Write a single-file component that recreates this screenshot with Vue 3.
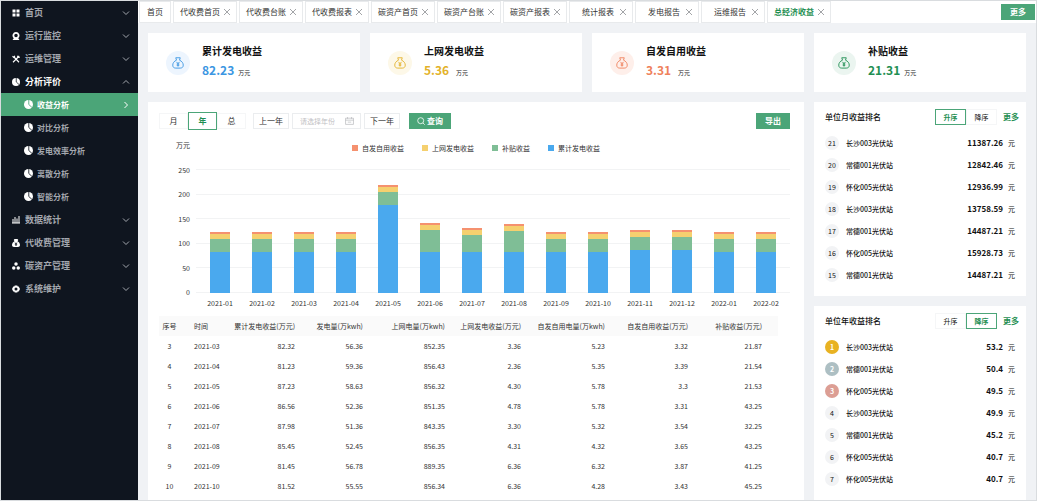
<script setup>
import { ref } from 'vue'

const menu = [
  { name: '首页', icon: 'grid' },
  { name: '运行监控', icon: 'camera' },
  { name: '运维管理', icon: 'tools' },
  {
    name: '分析评价',
    icon: 'pie',
    open: true,
    children: ['收益分析', '对比分析', '发电效率分析', '离散分析', '智能分析'],
  },
  { name: '数据统计', icon: 'bars' },
  { name: '代收费管理', icon: 'bag' },
  { name: '碳资产管理', icon: 'dots' },
  { name: '系统维护', icon: 'gear' },
]
const activeItem = ref('收益分析')

const tabs = [
  '代收费首页', '代收费台账', '代收费报表', '碳资产首页', '碳资产台账',
  '碳资产报表', '统计报表', '发电报告', '运维报告', '总经济收益',
]
const activeTab = ref('总经济收益')

const cards = [
  { title: '累计发电收益', value: '82.23', tone: 'blue' },
  { title: '上网发电收益', value: '5.36', tone: 'yellow' },
  { title: '自发自用收益', value: '3.31', tone: 'orange' },
  { title: '补贴收益', value: '21.31', tone: 'green' },
]

const periods = ['月', '年', '总']
const period = ref('年')
const year = ref('')

const legend = [
  { name: '自发自用收益', tone: 'self' },
  { name: '上网发电收益', tone: 'grid' },
  { name: '补贴收益', tone: 'subsidy' },
  { name: '累计发电收益', tone: 'total' },
]
const axisMax = 250
const ticks = [250, 200, 150, 100, 50, 0]
const bars = [
  { month: '2021-01', values: [4, 10, 26, 83] },
  { month: '2021-02', values: [4, 10, 26, 83] },
  { month: '2021-03', values: [4, 10, 26, 83] },
  { month: '2021-04', values: [4, 10, 26, 83] },
  { month: '2021-05', values: [4, 10, 26, 178] },
  { month: '2021-06', values: [4, 10, 44, 83] },
  { month: '2021-07', values: [4, 10, 34, 83] },
  { month: '2021-08', values: [4, 10, 42, 83] },
  { month: '2021-09', values: [4, 10, 26, 83] },
  { month: '2021-10', values: [4, 10, 26, 83] },
  { month: '2021-11', values: [4, 10, 26, 87] },
  { month: '2021-12', values: [4, 10, 26, 87] },
  { month: '2022-01', values: [4, 10, 26, 83] },
  { month: '2022-02', values: [4, 10, 26, 83] },
]

const columns = [
  '序号', '时间', '累计发电收益(万元)', '发电量(万kwh)', '上网电量(万kwh)',
  '上网发电收益(万元)', '自发自用电量(万kwh)', '自发自用收益(万元)', '补贴收益(万元)',
]
const rows = [
  ['3', '2021-03', '82.32', '56.36', '852.35', '3.36', '5.23', '3.32', '21.87'],
  ['4', '2021-04', '81.23', '59.36', '856.43', '2.36', '5.35', '3.39', '21.54'],
  ['5', '2021-05', '87.23', '58.63', '856.32', '4.30', '5.78', '3.3', '21.53'],
  ['6', '2021-06', '86.56', '52.36', '851.35', '4.78', '5.78', '3.31', '43.25'],
  ['7', '2021-07', '87.98', '51.36', '843.35', '3.30', '5.32', '3.54', '32.25'],
  ['8', '2021-08', '85.45', '52.45', '856.35', '4.31', '4.32', '3.65', '43.25'],
  ['9', '2021-09', '81.45', '56.78', '889.35', '6.36', '6.32', '3.87', '41.25'],
  ['10', '2021-10', '81.52', '55.55', '856.34', '6.36', '4.28', '3.43', '45.25'],
]

const rankings = ref([
  {
    title: '单位月收益排名',
    order: '升序',
    items: [
      [21, '长沙003光伏站', '11387.26'],
      [20, '常德001光伏站', '12842.46'],
      [19, '怀化005光伏站', '12936.99'],
      [18, '长沙003光伏站', '13758.59'],
      [17, '常德001光伏站', '14487.21'],
      [16, '怀化005光伏站', '15928.73'],
      [15, '常德001光伏站', '14487.21'],
    ],
  },
  {
    title: '单位年收益排名',
    order: '降序',
    items: [
      [1, '长沙003光伏站', '53.2'],
      [2, '常德001光伏站', '50.4'],
      [3, '怀化005光伏站', '49.5'],
      [4, '长沙003光伏站', '49.9'],
      [5, '常德001光伏站', '45.2'],
      [6, '怀化005光伏站', '40.7'],
      [7, '怀化005光伏站', '40.7'],
    ],
  },
])
</script>

<template>
  <div class="shell">
    <nav class="side">
      <template v-for="item in menu" :key="item.name">
        <a href="#" class="item" :class="{ open: item.open }">
          <svg class="ico" viewBox="0 0 16 16" aria-hidden="true">
            <path v-if="item.icon === 'grid'" d="M1 1h6v6H1zM9 1h6v6H9zM1 9h6v6H1zM9 9h6v6H9z" />
            <path v-else-if="item.icon === 'camera'" fill-rule="evenodd" d="M8 0a7 7 0 0 1 4.500 12.300L15 16H1l2.500-3.700A7 7 0 0 1 8 0zm0 3.500a3.500 3.500 0 1 0 0 7 3.500 3.500 0 0 0 0-7z" />
            <g v-else-if="item.icon === 'tools'" fill="none" stroke="currentColor" stroke-width="2.200">
              <path d="M2 14.500 14.500 2M4 4l10 10.500" />
              <path d="M1 2.500l3 2.500 1.500-3.500M11 1.500l1 3 3.500.5" />
            </g>
            <g v-else-if="item.icon === 'pie'">
              <circle cx="8" cy="8" r="8" /><path class="slit" d="M8.500 0v8l5.500 5" />
            </g>
            <path v-else-if="item.icon === 'bars'" d="M1 6h2v8H1zM5 2h2v12H5zM9 5h2v9H9zM13 0h2v14h-2zM0 13h16v2H0z" />
            <path v-else-if="item.icon === 'bag'" fill-rule="evenodd" d="M5 0h6l1.500 2L11 4.500c3 1.500 5 4.500 5 7.500 0 2.500-1.500 4-4 4H4c-2.500 0-4-1.500-4-4 0-3 2-6 5-7.500L3.500 2zM5 7l2 2.500H5.500V11H7v3h2v-3h1.500V9.500H9L11 7H9.500L8 9 6.500 7z" />
            <g v-else-if="item.icon === 'dots'">
              <circle cx="8" cy="4" r="3.500" /><circle cx="3.500" cy="12" r="3.500" /><circle cx="12.500" cy="12" r="3.500" />
            </g>
            <path v-else fill-rule="evenodd" d="M5.500 1h5l1 1.800h2L16 8l-2.500 5.200h-2l-1 1.800h-5l-1-1.800h-2L0 8l2.500-5.200h2zM8 5a3 3 0 1 0 0 6 3 3 0 0 0 0-6z" />
          </svg>
          <span>{{ item.name }}</span>
          <svg class="arrow" viewBox="0 0 8 8" aria-hidden="true">
            <path :d="item.open ? 'M1 5.500 4 2.500l3 3' : 'M1 2.500l3 3 3-3'" />
          </svg>
        </a>
        <a
          v-for="child in item.children"
          :key="child"
          href="#"
          class="item sub"
          :class="{ active: child === activeItem }"
          @click.prevent="activeItem = child"
        >
          <svg class="ico" viewBox="0 0 16 16" aria-hidden="true">
            <circle cx="8" cy="8" r="8" /><path class="slit" d="M8.500 0v8l5.500 5" />
          </svg>
          <span>{{ child }}</span>
          <svg v-if="child === activeItem" class="arrow" viewBox="0 0 8 8" aria-hidden="true">
            <path d="M2.500 1l3 3-3 3" />
          </svg>
        </a>
      </template>
    </nav>

    <div class="main">
      <header class="tabs">
        <div class="tab home"><a href="#">首页</a></div>
        <div v-for="tab in tabs" :key="tab" class="tab" :class="{ current: tab === activeTab }">
          <a href="#" @click.prevent="activeTab = tab">{{ tab }}</a>
          <button type="button" class="close" :aria-label="'关闭' + tab">
            <svg viewBox="0 0 8 8" aria-hidden="true"><path d="M1 1l6 6M7 1 1 7" /></svg>
          </button>
        </div>
        <button type="button" class="solid more-tabs">更多</button>
      </header>

      <main class="board">
        <section v-for="card in cards" :key="card.title" class="card" :class="card.tone">
          <div class="badge">
            <svg viewBox="0 0 16 16" aria-hidden="true">
              <path d="M5 1h6l-1 3.200c3.200 1.300 5 4 5 6.600 0 2.700-1.600 4-4 4H5c-2.400 0-4-1.300-4-4 0-2.600 1.800-5.300 5-6.600z" />
              <path d="M6 6.500l2 2.300 2-2.300M8 8.800v4M6.300 9.300h3.400M6.300 11h3.400" />
            </svg>
          </div>
          <div>
            <h2>{{ card.title }}</h2>
            <p><strong>{{ card.value }}</strong><small>万元</small></p>
          </div>
        </section>

        <section class="panel report">
          <div class="toolbar">
            <div class="segment">
              <button
                v-for="p in periods"
                :key="p"
                type="button"
                :class="{ on: p === period }"
                @click="period = p"
              >{{ p }}</button>
            </div>
            <button type="button" class="plain">上一年</button>
            <label class="date">
              <input v-model="year" type="text" placeholder="请选择年份" aria-label="年份" />
              <svg viewBox="0 0 16 14" aria-hidden="true"><path d="M1 2h14v11H1zM1 5.500h14M4.500 0v3M11.500 0v3M5 9h6" /></svg>
            </label>
            <button type="button" class="plain">下一年</button>
            <button type="button" class="solid query">
              <svg viewBox="0 0 8 8" aria-hidden="true"><circle cx="3.700" cy="3.700" r="3" /><path d="M6 6l1.700 1.700" /></svg>
              查询
            </button>
            <button type="button" class="solid export">导出</button>
          </div>

          <div class="chart">
            <span class="unit">万元</span>
            <ul class="legend">
              <li v-for="l in legend" :key="l.name"><i :class="l.tone"></i>{{ l.name }}</li>
            </ul>
            <div class="yaxis"><span v-for="t in ticks" :key="t">{{ t }}</span></div>
            <div class="lines"><i v-for="t in ticks" :key="t"></i></div>
            <div class="bars">
              <div v-for="b in bars" :key="b.month" class="bar">
                <i
                  v-for="(v, n) in b.values"
                  :key="n"
                  :class="legend[n].tone"
                  :style="{ height: (v / axisMax) * 100 + '%' }"
                ></i>
              </div>
            </div>
            <div class="xaxis"><span v-for="b in bars" :key="b.month">{{ b.month }}</span></div>
          </div>

          <table>
            <colgroup><col v-for="(c, n) in columns" :key="c" :class="'c' + n" /></colgroup>
            <thead>
              <tr><th v-for="c in columns" :key="c" scope="col">{{ c }}</th></tr>
            </thead>
            <tbody>
              <tr v-for="r in rows" :key="r[0]"><td v-for="(v, n) in r" :key="n">{{ v }}</td></tr>
            </tbody>
          </table>
        </section>

        <div class="ranks">
          <section v-for="rank in rankings" :key="rank.title" class="panel rank">
            <header>
              <h3>{{ rank.title }}</h3>
              <div class="segment">
                <button
                  v-for="o in ['升序', '降序']"
                  :key="o"
                  type="button"
                  :class="{ on: o === rank.order }"
                  @click="rank.order = o"
                >{{ o }}</button>
              </div>
              <a href="#">更多</a>
            </header>
            <ol>
              <li v-for="[no, name, amount] in rank.items" :key="no">
                <span class="no" :class="'n' + no">{{ no }}</span>
                <span class="name">{{ name }}</span>
                <b>{{ amount }}</b>
                <span class="yuan">元</span>
              </li>
            </ol>
          </section>
        </div>
      </main>
    </div>
  </div>
</template>

<style>
body {
  margin: 0;
}
</style>

<style scoped>
* {
  box-sizing: border-box;
}
.shell {
  display: flex;
  height: 100vh;
  overflow: hidden;
  border: 1px solid #d9dcdf;
  background: #f0f2f5;
  color: #333;
  font: 7px/10px "Noto Sans CJK SC", sans-serif;
}
a {
  color: inherit;
  text-decoration: none;
}
button,
input {
  margin: 0;
  padding: 0;
  border: 0;
  background: none;
  color: inherit;
  font: inherit;
}
button {
  cursor: pointer;
}
h2, h3, p, ul, ol {
  margin: 0;
  padding: 0;
  list-style: none;
}
svg {
  display: block;
  flex: none;
}

.side {
  flex: 0 0 137px;
  background: #0f151f;
  color: #a3a7ae;
}
.item {
  display: flex;
  align-items: center;
  gap: 5px;
  height: 23px;
  padding: 0 8px 0 11px;
  font-size: 9px;
  font-weight: 700;
}
.item.open {
  color: #fff;
}
.ico {
  width: 8px;
  height: 8px;
  color: #fff;
  fill: currentColor;
}
.slit {
  fill: none;
  stroke: #0f151f;
  stroke-width: 1.5;
}
.arrow {
  width: 8px;
  height: 8px;
  margin-left: auto;
  fill: none;
  stroke: #a3a7ae;
}
.sub {
  gap: 4px;
  padding-left: 23px;
  font-size: 8px;
}
.sub .ico {
  width: 9px;
  height: 9px;
}
.sub.active {
  background: #4ba578;
  color: #fff;
}
.sub.active .arrow {
  stroke: #fff;
}
.sub.active .slit {
  stroke: #4ba578;
}

.main {
  display: flex;
  flex: 1;
  flex-direction: column;
  min-width: 0;
}
.tabs {
  display: flex;
  flex: none;
  gap: 2px;
  height: 22px;
  padding-left: 1px;
  background: #fff;
  font-size: 8px;
}
.tab {
  display: flex;
  align-items: center;
  justify-content: flex-end;
  gap: 3px;
  width: 64px;
  padding-right: 5px;
  border: 1px solid #e8eaec;
}
.tab a {
  min-width: 36px;
  text-align: center;
}
.tab.home {
  justify-content: center;
  width: 32px;
  padding: 0;
}
.tab.home a {
  min-width: 0;
}
.tab.current a {
  color: #1f8f53;
  font-weight: 700;
}
.close svg {
  width: 8px;
  height: 8px;
  fill: none;
  stroke: #8b8e92;
  stroke-width: 0.8;
}
.solid {
  height: 16px;
  background: #4ba578;
  color: #fff;
  font-size: 8px;
  font-weight: 700;
}
.more-tabs {
  width: 34px;
  margin: 3px 1px 0 auto;
}

.board {
  display: grid;
  flex: 1;
  grid-template-columns: repeat(4, 1fr);
  grid-template-rows: 59px 1fr;
  gap: 10px;
  min-height: 0;
  padding: 10px 10px 0;
}
.card {
  display: flex;
  align-items: center;
  gap: 12px;
  padding-left: 18px;
  background: #fff;
}
.card h2 {
  color: #111;
  font-size: 10px;
  line-height: 18px;
}
.card p {
  display: flex;
  align-items: baseline;
  gap: 4px;
  line-height: 20px;
}
.card strong {
  min-width: 28px;
  font-size: 12px;
}
.card small {
  color: #222;
  font-size: 6px;
}
.badge {
  display: grid;
  place-items: center;
  width: 24px;
  height: 24px;
  border-radius: 50%;
}
.badge svg {
  width: 12px;
  height: 12px;
  fill: none;
  stroke: currentColor;
  stroke-width: 1.2;
}
.blue { color: #3b96e2; }
.yellow { color: #e3b22a; }
.orange { color: #ef815c; }
.green { color: #1f8f53; }
.blue .badge { background: #edf5fe; }
.yellow .badge { background: #fdf8e8; }
.orange .badge { background: #feefea; }
.green .badge { background: #ebf5f0; }

.panel {
  background: #fff;
}
.report {
  grid-column: span 3;
  min-height: 0;
  padding: 10px 14px 0 11px;
  overflow: hidden;
}
.toolbar {
  display: flex;
  align-items: center;
  height: 18px;
  font-size: 8px;
}
.segment {
  display: flex;
}
.segment button {
  width: 31px;
  height: 16px;
  border: 1px solid #f5f6f7;
}
.segment button.on {
  border-color: #4ba578;
  color: #1f8f53;
  font-weight: 700;
}
.toolbar .segment {
  align-items: center;
  margin-right: 7px;
}
.toolbar .segment button {
  width: 29px;
}
.toolbar .segment button.on {
  height: 18px;
}
.plain,
.date {
  height: 16px;
  border: 1px solid #ebedef;
}
.plain {
  width: 36px;
}
.date {
  display: flex;
  align-items: center;
  width: 69px;
  margin: 0 3px;
  padding: 0 6px 0 7px;
}
.date input {
  flex: 1;
  min-width: 0;
  outline: 0;
  font-size: 7px;
}
.date input::placeholder {
  color: #bfc1c4;
}
.date svg {
  width: 9px;
  height: 8px;
  fill: none;
  stroke: #a5a8ab;
}
.query {
  display: flex;
  align-items: center;
  justify-content: center;
  gap: 2px;
  width: 42px;
  margin-left: 9px;
}
.query svg {
  width: 8px;
  height: 8px;
  fill: none;
  stroke: #fff;
  stroke-width: 0.8;
}
.export {
  width: 34px;
  margin-left: auto;
}

.chart {
  display: grid;
  grid-template-columns: 31px 1fr;
  grid-template-rows: 29px 124px 18px;
  column-gap: 6px;
  padding-top: 10px;
}
.unit {
  text-align: right;
}
.legend {
  display: flex;
  gap: 18px;
  align-self: start;
  justify-content: center;
  padding: 3px 34px 0 0;
}
.legend li {
  display: flex;
  align-items: center;
  gap: 4px;
}
.legend i {
  width: 6px;
  height: 6px;
}
.yaxis,
.lines,
.bars {
  grid-row: 2;
}
.yaxis,
.lines {
  display: flex;
  flex-direction: column;
  justify-content: space-between;
}
.yaxis span {
  display: flex;
  align-items: center;
  justify-content: flex-end;
  height: 1px;
}
.lines {
  grid-column: 2;
}
.lines i {
  height: 1px;
  background: #f2f3f4;
}
.bars,
.xaxis {
  display: grid;
  grid-column: 2;
  grid-template-columns: repeat(14, 1fr);
  padding: 0 3px;
}
.bar {
  display: flex;
  flex-direction: column;
  justify-content: flex-end;
  width: 20px;
  height: 100%;
  margin: 0 auto;
}
.xaxis {
  align-items: end;
  padding-bottom: 3px;
  text-align: center;
}
.self { background: #f5916f; }
.grid { background: #f5d06f; }
.subsidy { background: #7fbe96; }
.total { background: #4aa9ee; }

table {
  width: calc(100% - 12px);
  margin-top: 5px;
  border-collapse: collapse;
  table-layout: fixed;
  white-space: nowrap;
}
.c0 { width: 21px; }
.c1 { width: 46px; }
.c2 { width: 69px; }
.c3 { width: 68px; }
.c4 { width: 82px; }
.c5 { width: 76px; }
.c6 { width: 84px; }
.c7 { width: 83px; }
.c8 { width: 90px; }
th,
td {
  height: 20px;
  padding: 0;
  font-weight: 400;
  text-align: right;
}
thead {
  background: #fafafa;
}
th:first-child,
td:first-child {
  text-align: center;
}
th:nth-child(2),
td:nth-child(2) {
  padding-left: 14px;
  text-align: left;
}
th:last-child,
td:last-child {
  padding-right: 16px;
}

.ranks {
  display: flex;
  flex-direction: column;
  gap: 10px;
  min-height: 0;
}
.rank {
  flex: none;
  padding: 7px 7px 10px 11px;
  color: #111;
}
.rank header {
  display: flex;
  align-items: center;
  height: 16px;
  margin-bottom: 7px;
}
.rank h3 {
  margin-right: auto;
  font-size: 8px;
  font-weight: 500;
}
.rank header a {
  margin-left: 6px;
  color: #1f8f53;
  font-size: 8px;
  font-weight: 700;
}
.rank li {
  display: flex;
  align-items: center;
  height: 22px;
  padding-right: 4px;
}
.name {
  font-weight: 500;
}
.no {
  width: 14px;
  height: 14px;
  margin-right: 7px;
  border-radius: 50%;
  background: #f2f3f5;
  line-height: 14px;
  text-align: center;
}
.n1, .n2, .n3 {
  color: #fff;
  font-weight: 700;
}
.n1 { background: #e8b222; }
.n2 { background: #adbfc3; }
.n3 { background: #dc9e94; }
.rank b {
  margin-left: auto;
  font-size: 8px;
}
.yuan {
  margin-left: 5px;
}
</style>
